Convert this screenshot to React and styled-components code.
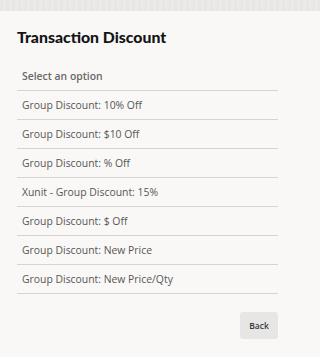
import React from 'react'
import styled, { createGlobalStyle } from 'styled-components'

const Global = createGlobalStyle`
  html, body {
    margin: 0;
    padding: 0;
    background: #f9f8f7;
  }
  body {
    font-family: "Open Sans", "Noto Sans", sans-serif;
  }
`

const Page = styled.div`
  width: 100%;
  min-height: 100vh;
  background: #f9f8f7;
  display: flex;
  flex-direction: column;
`

const TopStrip = styled.div`
  height: 11px;
  background: repeating-linear-gradient(
    90deg,
    #ebe9e8 0px,
    #e6e4e3 2px,
    #efedec 4px,
    #e8e6e5 6px
  );
`

const Content = styled.div`
  width: 261px;
  padding: 16px 0 0 17px;
  display: flex;
  flex-direction: column;
`

const Title = styled.h1`
  margin: 0 0 15px;
  font-family: "Lato", "Open Sans", sans-serif;
  font-weight: 900;
  font-size: 15.8px;
  line-height: 20px;
  color: #141414;
`

const List = styled.div`
  display: flex;
  flex-direction: column;
`

const Row = styled.div`
  height: 28px;
  display: flex;
  align-items: center;
  padding-left: 5px;
  border-bottom: 1px solid #d6d4d3;
  font-size: 10.4px;
  color: ${p => (p.$placeholder ? '#6a6867' : '#575655')};
  font-weight: ${p => (p.$placeholder ? 600 : 400)};
`

const Footer = styled.div`
  display: flex;
  justify-content: flex-end;
  padding-top: 18px;
`

const Button = styled.button`
  width: 38px;
  height: 27px;
  border: none;
  border-radius: 3px;
  background: #e8e6e5;
  font-family: "Open Sans", sans-serif;
  font-size: 8.5px;
  font-weight: 600;
  color: #3a3938;
  padding: 0;
`

const options = [
  'Group Discount: 10% Off',
  'Group Discount: $10 Off',
  'Group Discount: % Off',
  'Xunit - Group Discount: 15%',
  'Group Discount: $ Off',
  'Group Discount: New Price',
  'Group Discount: New Price/Qty',
]

export default function App() {
  return (
    <Page>
      <Global />
      <TopStrip />
      <Content>
        <Title>Transaction Discount</Title>
        <List>
          <Row $placeholder>Select an option</Row>
          {options.map((o, i) => (
            <Row key={i}>{o}</Row>
          ))}
        </List>
        <Footer>
          <Button>Back</Button>
        </Footer>
      </Content>
    </Page>
  )
}
